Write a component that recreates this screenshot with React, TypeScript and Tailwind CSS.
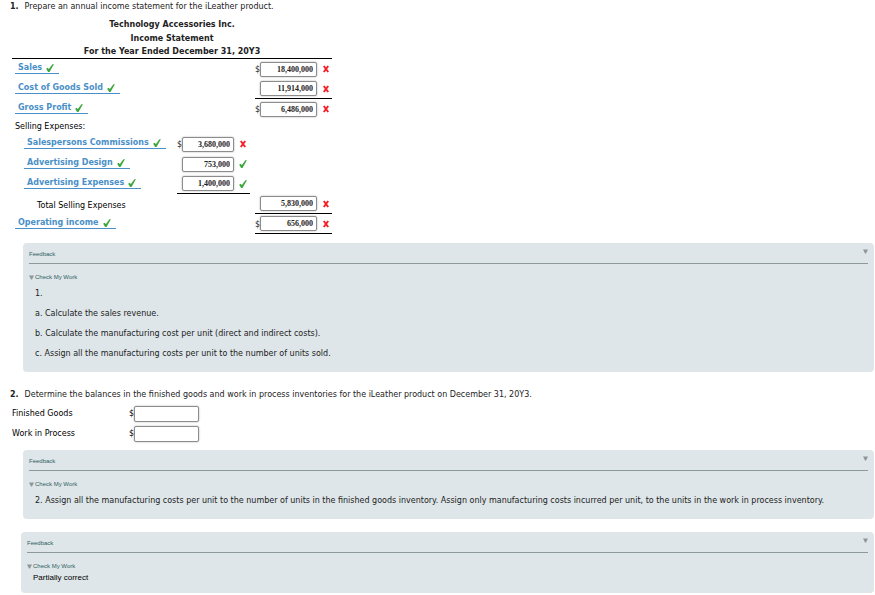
import { useState, type ReactNode } from 'react';
import clsx from 'clsx';

type Amount = { value: string; correct: boolean; dollar?: boolean; line?: boolean };
type Row = { label: string; kind: 'answer' | 'sub' | 'plain' | 'total'; detail?: Amount; total?: Amount };

const rows: Row[] = [
  { label: 'Sales', kind: 'answer', total: { value: '18,400,000', correct: false, dollar: true } },
  { label: 'Cost of Goods Sold', kind: 'answer', total: { value: '11,914,000', correct: false, line: true } },
  { label: 'Gross Profit', kind: 'answer', total: { value: '6,486,000', correct: false, dollar: true } },
  { label: 'Selling Expenses:', kind: 'plain' },
  { label: 'Salespersons Commissions', kind: 'sub', detail: { value: '3,680,000', correct: false, dollar: true } },
  { label: 'Advertising Design', kind: 'sub', detail: { value: '753,000', correct: true } },
  { label: 'Advertising Expenses', kind: 'sub', detail: { value: '1,400,000', correct: true, line: true } },
  { label: 'Total Selling Expenses', kind: 'total', total: { value: '5,830,000', correct: false, line: true } },
  { label: 'Operating income', kind: 'answer', total: { value: '656,000', correct: false, dollar: true, line: true } },
];

function Check() {
  return (
    <svg viewBox="0 0 8 8" className="h-2 w-2 shrink-0" aria-hidden="true">
      <path d="M0.2 4.7 L1.5 3.7 L2.9 5.1 L6.4 0.2 L7.9 0.3 L3.5 7.9 L2.1 7.9 Z" fill="#3da63d" />
    </svg>
  );
}

function Cross() {
  return (
    <svg viewBox="0 0 8 8" className="h-2 w-2 shrink-0" aria-hidden="true">
      <path d="M1.8 1 L6.2 7 M6.2 1 L1.8 7" stroke="#f5222a" strokeWidth="2" fill="none" />
    </svg>
  );
}

function Triangle() {
  return (
    <svg viewBox="0 0 5 5" className="h-[5px] w-[5px] shrink-0" aria-hidden="true">
      <path d="M0 0.5 H5 L3 4.5 H2 Z" fill="#8d9799" />
    </svg>
  );
}

function AmountCell({ label, amount, wide }: { label: string; amount?: Amount; wide?: boolean }) {
  if (!amount) return <td />;
  return (
    <td className={clsx('p-0 align-middle', amount.line && 'border-b border-black')}>
      <div className="flex items-center">
        <span className="w-[5px] pt-0.5 leading-3">{amount.dollar && '$'}</span>
        <input
          aria-label={label}
          defaultValue={amount.value}
          className={clsx(
            'h-[15px] rounded-xs border border-[#8c8c8c] bg-white pr-[3px] text-right font-["Liberation_Serif",serif] text-[8px] font-bold text-[#222] shadow-[0_0_2px_#aaa]',
            wide ? 'w-[57px]' : 'w-[52px]',
          )}
        />
        <span className="ml-[5px]">{amount.correct ? <Check /> : <Cross />}</span>
      </div>
    </td>
  );
}

function RowLabel({ row }: { row: Row }) {
  if (row.kind === 'plain') return <div className="pt-px pl-[3px]">{row.label}</div>;
  if (row.kind === 'total') return <div className="pt-1 pl-[25px]">{row.label}</div>;
  return (
    <a
      href="#"
      className={clsx(
        'inline-flex h-[15px] items-center gap-1 border-b border-[#4a90c8] pt-[3px] pr-[5px] pl-[3px] font-bold text-[#4a90c8]',
        row.kind === 'sub' ? 'ml-3' : 'ml-[3px]',
      )}
    >
      {row.label}
      <Check />
    </a>
  );
}

function Feedback({ children, className }: { children: ReactNode; className?: string }) {
  const [open, setOpen] = useState(true);
  return (
    <section className={clsx('mr-px rounded-sm bg-[#dee6e9] px-1.5', className)}>
      <button
        type="button"
        onClick={() => setOpen(!open)}
        className='flex h-[21px] w-full justify-between border-b border-[#8d9a9c] pt-1.5 font-["Liberation_Sans",sans-serif] text-[6px] leading-[10px] text-[#2f5f62]'
      >
        Feedback
        <Triangle />
      </button>
      {open && (
        <>
          <h3 className='flex items-center gap-px pt-2 font-["Liberation_Sans",sans-serif] text-[6px] leading-[10px] text-[#2f5f62]'>
            <Triangle />
            Check My Work
          </h3>
          {children}
        </>
      )}
    </section>
  );
}

export default function App() {
  return (
    <main className='bg-white font-["DejaVu_Sans",sans-serif] text-[8px] leading-[14px] text-[#222]'>
      <p className="pl-[10px]">
        <b className="mr-1.5">1.</b>
        Prepare an annual income statement for the iLeather product.
      </p>
      <table className="mt-1 ml-3 w-80 table-fixed border-separate border-spacing-0">
        <caption className="border-b border-black font-bold">
          <div>Technology Accessories Inc.</div>
          <div>Income Statement</div>
          <div className="leading-[12px]">For the Year Ended December 31, 20Y3</div>
        </caption>
        <colgroup>
          <col className="w-[165px]" />
          <col className="w-[73px]" />
          <col className="w-[5px]" />
          <col className="w-[77px]" />
        </colgroup>
        <tbody>
          {rows.map((row) => (
            <tr key={row.label} className={row.kind === 'plain' ? 'h-[15px]' : 'h-5'}>
              <th
                scope="row"
                className={clsx(
                  'p-0 text-left font-normal whitespace-nowrap text-black',
                  row.kind === 'total' || row.kind === 'plain' ? 'align-middle' : 'align-top',
                )}
              >
                <RowLabel row={row} />
              </th>
              <AmountCell label={row.label} amount={row.detail} />
              <td />
              <AmountCell label={row.label} amount={row.total} wide />
            </tr>
          ))}
        </tbody>
      </table>

      <Feedback className="mt-[9px] ml-[23px] pb-[11px]">
        <div className="space-y-1.5 pt-[5px] pl-1.5">
          <p>1.</p>
          <p>a. Calculate the sales revenue.</p>
          <p>b. Calculate the manufacturing cost per unit (direct and indirect costs).</p>
          <p>c. Assign all the manufacturing costs per unit to the number of units sold.</p>
        </div>
      </Feedback>

      <p className="mt-4 pl-[10px]">
        <b className="mr-1.5">2.</b>
        Determine the balances in the finished goods and work in process inventories for the iLeather product on December
        31, 20Y3.
      </p>
      <form className="mt-0.5 ml-3 text-black">
        {['Finished Goods', 'Work in Process'].map((name) => (
          <label key={name} className="flex h-5 items-center">
            <span className="w-[117px]">{name}</span>
            <span className="w-[5px]">$</span>
            <input className="h-4 w-[65px] rounded-xs border border-[#8c8c8c] bg-white px-[3px] text-[9px] shadow-[0_0_2px_#aaa]" />
          </label>
        ))}
      </form>

      <Feedback className="mt-1.5 ml-[23px] pb-[11px]">
        <p className="pt-[5px] pl-1.5">
          2. Assign all the manufacturing costs per unit to the number of units in the finished goods inventory. Assign only
          manufacturing costs incurred per unit, to the units in the work in process inventory.
        </p>
      </Feedback>

      <Feedback className="mt-[13px] ml-[21px] pb-2">
        <p className='pl-1.5 font-["Liberation_Sans",sans-serif] text-black'>Partially correct</p>
      </Feedback>
    </main>
  );
}
